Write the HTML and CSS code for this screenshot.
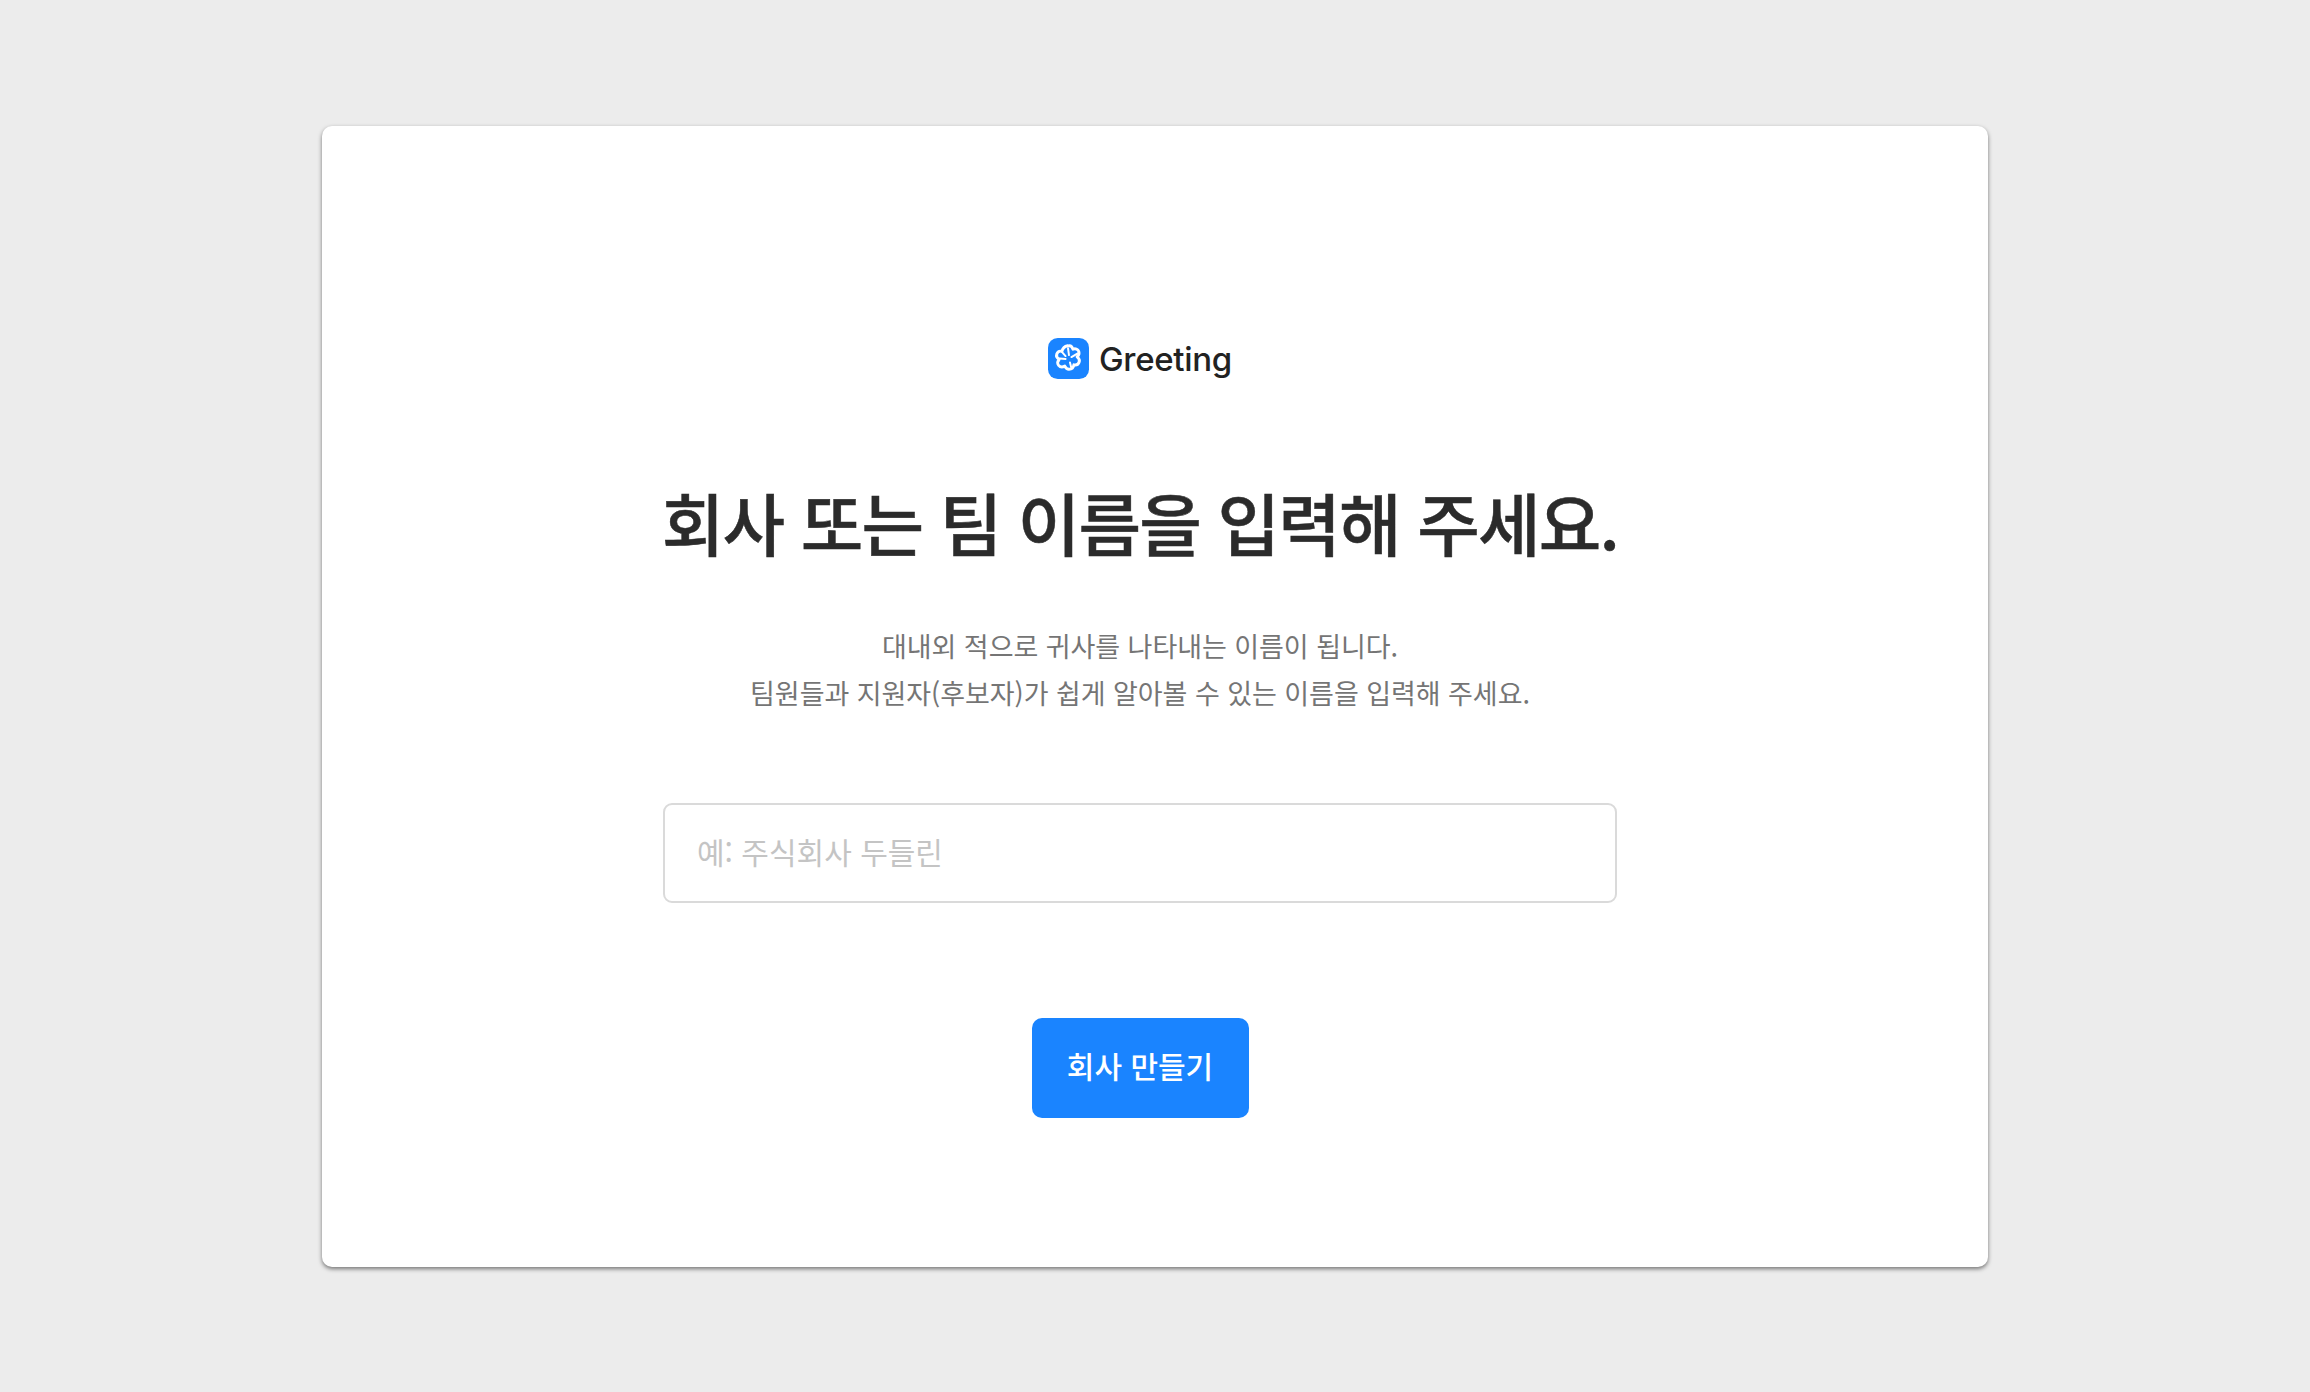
FILE: index.html
```html
<!DOCTYPE html>
<html lang="ko">
<head>
  <meta charset="UTF-8">
  <meta name="viewport" content="width=device-width, initial-scale=1.0">
  <title>Greeting</title>
  <link rel="stylesheet" href="styles.css">
</head>
<body>
  <main class="card">
    <div class="logo">
      <svg class="logo-icon" viewBox="0 0 42 42" aria-hidden="true">
        <rect width="42" height="42" rx="10" fill="#1a84ff"/>
        <path d="M20.500 8c2.600-.6 4.400 1 5 3.500 2.500-.9 5.200-.3 6 2.200.8 2.400-.2 4.300-1.700 5.600 1.900 1.400 3 3.400 2 5.700-1 2.300-3.200 3-5.300 2.500-.3 2.500-2.200 4.500-5 4.500-2.300 0-3.500-1.600-4.300-3.200-2.200 1.300-4.700 1.200-6.300-.8-1.500-2-1-4.300.5-6-1.900-1.300-3.200-3.300-2.400-5.600.8-2.400 3-3.300 5.300-2.800.6-2.700 2.900-5 5.900-5.600z" fill="#1a84ff" stroke="#fff" stroke-width="3" stroke-linejoin="round"/>
        <path d="M20.500 10.500l1 7M30 16l-6 3.500M14 14l4 4.500M12 21l6 .5M24 31l-1.500-6" fill="none" stroke="#fff" stroke-width="2" stroke-linecap="round"/>
      </svg>
      <span class="logo-text">Greeting</span>
    </div>
    <h1 class="title">회사 또는 팀 이름을 입력해 주세요.</h1>
    <p class="desc">대내외 적으로 귀사를 나타내는 이름이 됩니다.<br>팀원들과 지원자(후보자)가 쉽게 알아볼 수 있는 이름을 입력해 주세요.</p>
    <input class="name-input" type="text" placeholder="예: 주식회사 두들린">
    <button class="submit-btn" type="button">회사 만들기</button>
  </main>
</body>
</html>
```

FILE: styles.css
```css
body {
  margin: 0;
  background: #ececec;
  font-family: 'Noto Sans CJK KR', 'Noto Sans', sans-serif;
  display: flex;
  justify-content: center;
  align-items: center;
  height: 100vh;
}
.card {
  width: 1666px;
  height: 1141px;
  box-sizing: border-box;
  padding: 212px 30px 0 0;
  background: #fff;
  border-radius: 10px;
  box-shadow: 0 2px 4px rgba(0, 0, 0, 0.5);
  display: flex;
  flex-direction: column;
  align-items: center;
}
.logo {
  display: flex;
  align-items: center;
  gap: 10px;
  height: 42px;
}
.logo-icon {
  width: 41px;
  height: 41px;
}
.logo-text {
  font-family: 'Inter', sans-serif;
  font-size: 33px;
  font-weight: 500;
  letter-spacing: -0.3px;
  color: #222;
}
.title {
  margin: 89px 0 0;
  font-size: 68px;
  line-height: 106px;
  font-weight: 500;
  letter-spacing: -1.75px;
  color: #2b2b2b;
  -webkit-text-stroke: 0.5px #2b2b2b;
  white-space: nowrap;
}
.desc {
  margin: 47px 0 0;
  font-size: 27px;
  line-height: 47px;
  letter-spacing: -0.05px;
  color: #757575;
  text-align: center;
}
.name-input {
  width: 954px;
  height: 100px;
  box-sizing: border-box;
  margin-top: 87px;
  padding: 0 32px 4px;
  border: 2px solid #dadada;
  border-radius: 9px;
  background: #fff;
  font-family: inherit;
  font-size: 30px;
  outline: none;
}
.name-input::placeholder {
  color: #c4c4c4;
  opacity: 1;
}
.submit-btn {
  width: 217px;
  height: 100px;
  margin-top: 115px;
  padding: 0 0 6px;
  border: 0;
  border-radius: 10px;
  background: #1a84ff;
  color: #fff;
  font-family: inherit;
  font-size: 30px;
  font-weight: 500;
  cursor: pointer;
}
```
